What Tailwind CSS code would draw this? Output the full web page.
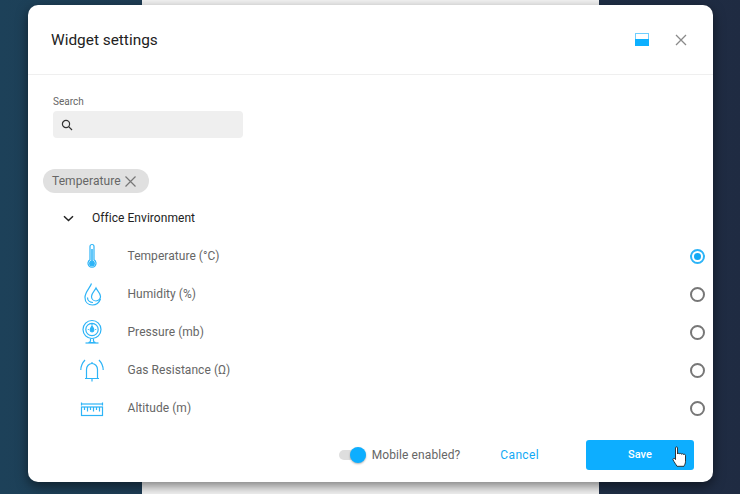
<!DOCTYPE html>
<html>
<head>
<meta charset="utf-8">
<script src="https://cdn.jsdelivr.net/npm/@tailwindcss/browser@4"></script>
</head>
<body class="m-0">
<div class="relative w-[740px] h-[494px] overflow-hidden bg-gradient-to-r from-[#1d4159] to-[#1f2b42] font-['Roboto',sans-serif]">
  <div class="ml-[142px] w-[457px] h-full bg-[#f4f4f4]"></div>
  <div class="absolute left-[28px] top-[5px] w-[685px] h-[477px] bg-white rounded-[10px] shadow-[0_4px_12px_rgba(0,0,0,0.5)] flex flex-col">
    <header class="h-[70px] shrink-0 border-b border-[#efefef] flex items-center justify-between pl-[23px] pr-[25px]">
      <h1 class="text-[15.4px] leading-none font-normal text-[#222] mt-[2px]">Widget settings</h1>
      <div class="flex items-center gap-[25px]">
        <svg width="14" height="13" viewBox="0 0 14 13"><rect x="0.5" y="0.5" width="13" height="12" fill="#fff" stroke="#6fcfff"/><rect x="0" y="6" width="14" height="7" fill="#0db0ff"/></svg>
        <svg width="14" height="14" viewBox="0 0 14 14" fill="none" stroke="#8a8a8a" stroke-width="1.3"><path d="M2 2l10 10M12 2L2 12"/></svg>
      </div>
    </header>
    <div class="flex-1 flex flex-col relative">
      <div class="pl-[25px] pt-[21px]">
        <label class="block text-[10px] leading-[12px] text-[#666] mb-[3px]">Search</label>
        <div class="w-[190px] h-[27px] bg-[#efefef] rounded-[4px] flex items-center pl-[8px]">
          <svg width="12" height="12" viewBox="0 0 12 12" fill="none" stroke="#333" stroke-width="1.2"><circle cx="5" cy="5" r="3.6"/><path d="M7.7 7.7L11 11"/></svg>
        </div>
      </div>
      <div class="ml-[15px] mt-[31px] w-[106px] h-[24px] rounded-full bg-[#e0e0e0] flex items-center pl-[9px] gap-[2px]">
        <span class="text-[12px] text-[#666] tracking-[0.08px]">Temperature</span>
        <svg width="15" height="15" viewBox="0 0 15 15" fill="none" stroke="#777" stroke-width="1.2"><path d="M2.500 2.500l10 10M12.500 2.500l-10 10"/></svg>
      </div>
      <div class="h-[38px] mt-[6px] flex items-center pl-[35px]">
        <svg width="11" height="7" viewBox="0 0 11 7" fill="none" stroke="#222" stroke-width="1.5"><path d="M1 1.2l4.500 4.300L10 1.200"/></svg>
        <span class="ml-[18px] text-[12px] text-[#222] tracking-[0.05px]">Office Environment</span>
      </div>
      <ul class="flex flex-col">
        <li class="h-[38px] flex items-center">
          <div class="w-[99.500px] flex">
            <div class="w-[26px] ml-[51px] flex justify-center">
              <svg width="26" height="26" viewBox="0 0 26 26" fill="none" stroke="#2db4f7" stroke-width="1.200"><path d="M11 3.500a2 2 0 0 1 4 0v13.300a4 4 0 1 1-4 0z"/><circle cx="13" cy="20.500" r="2.300" fill="#2db4f7"/><path d="M13 18V6" stroke-width="1.500"/></svg>
            </div>
          </div>
          <span class="text-[12px] text-[#666] tracking-[0.05px]">Temperature (°C)</span>
          <span class="ml-auto mr-[8px] w-[15px] h-[15px] rounded-full border-2 border-[#2db4f7] flex items-center justify-center"><span class="w-[7px] h-[7px] rounded-full bg-[#12a9f5]"></span></span>
        </li>
        <li class="h-[38px] flex items-center">
          <div class="w-[99.500px] flex">
            <div class="w-[26px] ml-[52px] flex justify-center">
              <svg width="26" height="26" viewBox="0 0 26 26" fill="none" stroke="#2db4f7" stroke-width="1.200"><path d="M11.500 2.500C10 7 5 11 5 16.500C5 21 8 24 12.500 24C16 24 19 22 20.500 18"/><path d="M16 7c-1 2.500-4.500 5-4.500 8.500a4.500 4.500 0 0 0 9 0C20.500 12 17 9.500 16 7z"/><path d="M7.500 16.500c0 3 2.500 5 5.500 5"/></svg>
            </div>
          </div>
          <span class="text-[12px] text-[#666] tracking-[0.05px]">Humidity (%)</span>
          <span class="ml-auto mr-[8px] w-[15px] h-[15px] rounded-full border-2 border-[#777]"></span>
        </li>
        <li class="h-[38px] flex items-center">
          <div class="w-[99.500px] flex">
            <div class="w-[26px] ml-[51px] flex justify-center">
              <svg width="26" height="26" viewBox="0 0 26 26" fill="none" stroke="#2db4f7" stroke-width="1.200"><circle cx="13" cy="10.500" r="9"/><circle cx="13" cy="10.500" r="6.200"/><path d="M13 7c-1 1.800-1.800 2.800-1.800 4a1.800 1.800 0 0 0 3.600 0c0-1.200-.8-2.200-1.800-4z" fill="#2db4f7"/><path d="M13 5v1.200M8.800 10.500h1M16.200 10.500h1"/><path d="M11.500 19.500v2.500q0 1-2 1.500h7q-2-.5-2-1.500v-2.500"/><path d="M6.500 24h13"/></svg>
            </div>
          </div>
          <span class="text-[12px] text-[#666] tracking-[0.05px]">Pressure (mb)</span>
          <span class="ml-auto mr-[8px] w-[15px] h-[15px] rounded-full border-2 border-[#777]"></span>
        </li>
        <li class="h-[38px] flex items-center">
          <div class="w-[99.500px] flex">
            <div class="w-[26px] ml-[51px] flex justify-center">
              <svg width="26" height="26" viewBox="0 0 26 26" fill="none" stroke="#2db4f7" stroke-width="1.200"><path d="M7.500 21.500v-9a5.500 6 0 0 1 11 0v9z"/><path d="M6 21.500h14M13 22v2.500"/><path d="M13 5v1.500"/><path d="M6 3C3.200 6 1.800 9 1.800 13M20 3c2.800 3 4.200 6 4.200 10"/></svg>
            </div>
          </div>
          <span class="text-[12px] text-[#666] tracking-[0.05px]">Gas Resistance (Ω)</span>
          <span class="ml-auto mr-[8px] w-[15px] h-[15px] rounded-full border-2 border-[#777]"></span>
        </li>
        <li class="h-[38px] flex items-center">
          <div class="w-[99.500px] flex">
            <div class="w-[26px] ml-[51px] flex justify-center">
              <svg width="26" height="26" viewBox="0 0 26 26" fill="none" stroke="#2db4f7" stroke-width="1.200"><path d="M2.500 9h21"/><path d="M2.500 7.500v3M23.500 7.500v3"/><rect x="2.500" y="12" width="21" height="8.500"/><path d="M5.500 12v3M8.500 12v4.500M11.500 12v3M14.500 12v4.500M17.500 12v3M20.500 12v4.500"/></svg>
            </div>
          </div>
          <span class="text-[12px] text-[#666] tracking-[0.05px]">Altitude (m)</span>
          <span class="ml-auto mr-[8px] w-[15px] h-[15px] rounded-full border-2 border-[#777]"></span>
        </li>
      </ul>
      <footer class="absolute left-0 right-0 bottom-[12px] h-[30px] flex items-center justify-end pr-[19px]">
        <div class="relative w-[27px] h-[10px] rounded-full bg-[#dedede] mr-[6px]">
          <span class="absolute right-0 top-[-3px] w-[16px] h-[16px] rounded-full bg-[#0daeff] shadow-[0_1px_2px_rgba(0,0,0,0.3)]"></span>
        </div>
        <span class="text-[12px] text-[#666] tracking-[0.1px] mb-[1px]">Mobile enabled?</span>
        <span class="ml-[40px] text-[12px] text-[#12a9f5] tracking-[0.35px]">Cancel</span>
        <button class="relative ml-[47px] w-[108px] h-[30px] rounded-[3px] bg-[#0daeff] text-white text-[11px] font-medium">Save
          <svg class="absolute left-[86px] top-[6px]" width="15" height="22" viewBox="0 0 15 22"><path d="M3.500 1.800c0-1.200 2-1.200 2 0V8c0-.9 2-.9 2 0 0-.8 2-.8 2 .2 0-.7 2-.7 2 .3.200-.5 2-.3 2 .8v6c0 2.500-1 3.500-1.500 5H5c-.8-1.500-3-4.500-4-6.500-.5-1.200 1-2 2-1l.5.800z" fill="#fff" stroke="#222" stroke-width="0.9"/></svg>
        </button>
      </footer>
    </div>
  </div>
</div>
</body>
</html>
